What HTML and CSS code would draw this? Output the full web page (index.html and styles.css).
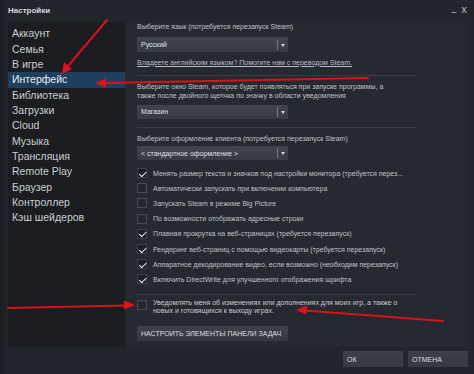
FILE: index.html
```html
<!DOCTYPE html>
<html lang="ru">
<head>
<meta charset="utf-8">
<title>Настройки</title>
<link rel="stylesheet" href="styles.css">
</head>
<body>
<div class="window">
  <div class="titlebar">
    <span class="title">Настройки</span>
    <span class="controls"><span class="min">_</span><span class="close">X</span></span>
  </div>
  <div class="main">
    <nav class="sidebar">
      <div class="item">Аккаунт</div>
      <div class="item">Семья</div>
      <div class="item">В игре</div>
      <div class="item active">Интерфейс</div>
      <div class="item">Библиотека</div>
      <div class="item">Загрузки</div>
      <div class="item">Cloud</div>
      <div class="item">Музыка</div>
      <div class="item">Трансляция</div>
      <div class="item">Remote Play</div>
      <div class="item">Браузер</div>
      <div class="item">Контроллер</div>
      <div class="item">Кэш шейдеров</div>
    </nav>
    <section class="content">
      <div class="label first">Выберите язык (потребуется перезапуск Steam)</div>
      <div class="select s1"><span class="val">Русский</span><span class="arrow"></span></div>
      <div class="link">Владеете английским языком? Помогите нам с переводом Steam.</div>
      <div class="sep sep1"></div>
      <div class="label two">Выберите окно Steam, которое будет появляться при запуске программы, а<br>также после двойного щелчка по значку в области уведомления</div>
      <div class="select s2"><span class="val">Магазин</span><span class="arrow"></span></div>
      <div class="sep sep2"></div>
      <div class="label three">Выберите оформление клиента (потребуется перезапуск Steam)</div>
      <div class="select s3"><span class="val">&lt; стандартное оформление &gt;</span><span class="arrow"></span></div>
      <div class="checks">
        <div class="check on"><span class="box"></span><span class="txt">Менять размер текста и значков под настройки монитора (требуется перез...</span></div>
        <div class="check"><span class="box"></span><span class="txt">Автоматически запускать при включении компьютера</span></div>
        <div class="check"><span class="box"></span><span class="txt">Запускать Steam в режиме Big Picture</span></div>
        <div class="check"><span class="box"></span><span class="txt">По возможности отображать адресные строки</span></div>
        <div class="check on"><span class="box"></span><span class="txt">Плавная прокрутка на веб-страницах (требуется перезапуск)</span></div>
        <div class="check on"><span class="box"></span><span class="txt">Рендеринг веб-страниц с помощью видеокарты (требуется перезапуск)</span></div>
        <div class="check on"><span class="box"></span><span class="txt">Аппаратное декодирование видео, если возможно (необходим перезапуск)</span></div>
        <div class="check on"><span class="box"></span><span class="txt">Включить DirectWrite для улучшенного отображения шрифта</span></div>
      </div>
      <div class="sep sep3"></div>
      <div class="notify"><span class="box"></span><span class="txt">Уведомлять меня об изменениях или дополнениях для моих игр, а также о<br>новых и готовящихся к выходу играх.</span></div>
      <div class="btn taskbar">НАСТРОИТЬ ЭЛЕМЕНТЫ ПАНЕЛИ ЗАДАЧ</div>
    </section>
  </div>
  <div class="footer">
    <div class="btn fbtn">ОК</div>
    <div class="btn fbtn">ОТМЕНА</div>
  </div>
  <svg class="arrows" width="474" height="374" viewBox="0 0 474 374">
    <g stroke="#e3111b" stroke-width="2" stroke-linecap="round" fill="none" opacity="0.95">
      <line x1="107" y1="20" x2="68" y2="66"/>
      <line x1="368" y1="78" x2="104" y2="83"/>
      <line x1="8" y1="308" x2="126" y2="305.5"/>
      <line x1="443" y1="321" x2="305" y2="310.5"/>
    </g>
    <g fill="#e3111b">
      <polygon points="62,74 64,62 72,69"/>
      <polygon points="95,83 106,78.5 106,87.5"/>
      <polygon points="135,305 124,300.5 124,309.5"/>
      <polygon points="296,310 307,305.5 306,314.5"/>
    </g>
  </svg>
</div>
</body>
</html>
```

FILE: styles.css
```css
* { box-sizing: border-box; }
html, body { margin: 0; padding: 0; }
body {
  width: 474px;
  height: 374px;
  overflow: hidden;
  background: #1f2227;
  font-family: "Liberation Sans", Arial, sans-serif;
}
.window {
  position: relative;
  width: 474px;
  height: 374px;
  background: linear-gradient(90deg, #1a1d24 0, #22252b 8px, #22252b 100%);
  display: flex;
  flex-direction: column;
}
.titlebar {
  height: 22px;
  display: flex;
  align-items: center;
  justify-content: space-between;
  padding: 0 7px 2px 8px;
}
.title {
  color: #d8dade;
  font-size: 8px;
  font-weight: bold;
}
.controls {
  display: flex;
  gap: 5px;
  color: #c9ccd1;
  font-size: 8.5px;
}
.controls .min { position: relative; top: -2px; }
.main {
  display: flex;
  height: 325px;
  padding: 0 6px 0 8px;
}
.sidebar {
  width: 117px;
  background: #1b1d21;
  padding-top: 4.3px;
}
.item {
  height: 15.33px;
  line-height: 15.33px;
  padding-left: 4px;
  font-size: 10.5px;
  color: #c9ced4;
}
.item.active {
  background: #1f3f5f;
  color: #e6ecf2;
}
.content {
  flex: 1;
  background: #262930;
  padding: 0 14px 0 12px;
  font-size: 7px;
  color: #bfc2c6;
}
.label { line-height: 9px; white-space: nowrap; }
.label.first { margin-top: 0; }
.label.two { margin-top: 6.5px; }
.label.three { margin-top: 6px; }
.select {
  width: 151px;
  height: 14px;
  background: linear-gradient(180deg, #40444d 0, #383b44 100%);
  display: flex;
  align-items: center;
  justify-content: space-between;
  color: #dfe1e4;
}
.select .val { padding-left: 4px; }
.select .arrow {
  width: 11px;
  height: 10px;
  border-left: 1px solid #767a82;
  position: relative;
}
.select .arrow::after {
  content: "";
  position: absolute;
  left: 3px;
  top: 4px;
  border-left: 2.5px solid transparent;
  border-right: 2.5px solid transparent;
  border-top: 3px solid #d0d3d7;
}
.s1 { margin-top: 6px; height: 15px; }
.s2 { margin-top: 4.5px; }
.s3 { margin-top: 3.5px; }
.link {
  margin-top: 5.5px;
  line-height: 9px;
  text-decoration: underline;
  color: #b9bcc1;
  white-space: nowrap;
}
.sep {
  height: 1px;
  background: #3a3d45;
  width: 279px;
}
.sep1 { margin-top: 8px; }
.sep2 { margin-top: 8px; }
.sep3 { margin-top: 6.5px; }
.checks { margin-top: 5.5px; }
.check {
  height: 15.2px;
  display: flex;
  align-items: center;
  white-space: nowrap;
}
.box {
  flex: none;
  width: 10px;
  height: 10px;
  border: 1px solid #474b53;
  background: #24272d;
  position: relative;
  margin-right: 6px;
}
.check.on .box {
  background: #1c1e23;
  border-color: #3d4047;
}
.check.on .box::after {
  content: "";
  position: absolute;
  left: 2.5px;
  top: 0.5px;
  width: 3px;
  height: 5.5px;
  border-right: 1.6px solid #f2f3f5;
  border-bottom: 1.6px solid #f2f3f5;
  transform: rotate(45deg);
}
.notify {
  margin-top: 4px;
  display: flex;
  align-items: flex-start;
}
.notify .box { margin-top: 1.5px; margin-right: 6px; }
.notify .txt { line-height: 8.5px; white-space: nowrap; color: #c6c9cd; }
.btn {
  background: linear-gradient(180deg, #3d4048 0, #363940 100%);
  color: #dadcdf;
  font-size: 7px;
  display: flex;
  align-items: center;
  padding-left: 4px;
}
.taskbar {
  margin-top: 10px;
  width: 151px;
  height: 15px;
}
.footer {
  display: flex;
  justify-content: flex-end;
  gap: 5px;
  padding: 4px 6px 0 0;
}
.fbtn {
  width: 60px;
  height: 16px;
}
.arrows {
  position: absolute;
  left: 0;
  top: 0;
  pointer-events: none;
}
```
